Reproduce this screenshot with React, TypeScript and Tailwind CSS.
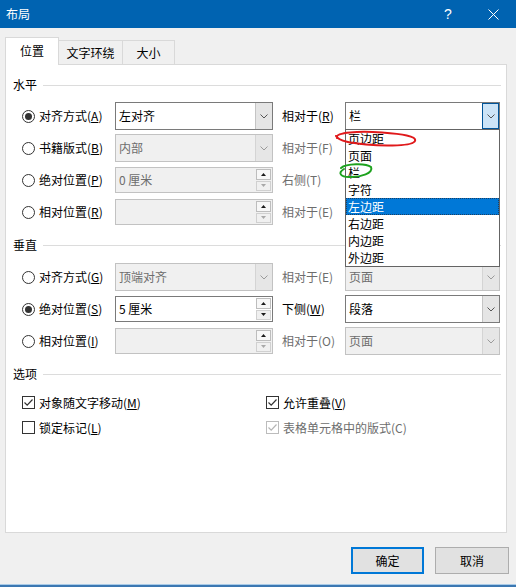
import * as React from "react";
import clsx from "clsx";

const LIST_ITEMS = ["页边距", "页面", "栏", "字符", "左边距", "右边距", "内边距", "外边距"];

function Acc({ text, k }: { text: string; k: string }) {
  return (
    <>
      {text}(<u>{k}</u>)
    </>
  );
}

function Chevron({ dim }: { dim?: boolean }) {
  return (
    <svg width="8" height="5" viewBox="0 0 8 5">
      <path d="M0.5 0.5 L4 4 L7.5 0.5" fill="none" stroke={dim ? "#9a9a9a" : "#555555"} strokeWidth="1" />
    </svg>
  );
}

function Tri({ up, dim }: { up?: boolean; dim?: boolean }) {
  return (
    <svg width="5" height="3" viewBox="0 0 5 3">
      <path d={up ? "M0 3 L2.5 0 L5 3Z" : "M0 0 L2.5 3 L5 0Z"} fill={dim ? "#a8a8a8" : "#1a1a1a"} />
    </svg>
  );
}

function Radio({ checked }: { checked?: boolean }) {
  return (
    <span className="flex h-[13px] w-[13px] shrink-0 items-center justify-center rounded-full border border-[#333333] bg-white">
      {checked && <span className="h-[7px] w-[7px] rounded-full bg-[#333333]" />}
    </span>
  );
}

function Check({ checked, disabled }: { checked?: boolean; disabled?: boolean }) {
  return (
    <span
      className={clsx(
        "flex h-[13px] w-[13px] shrink-0 items-center justify-center border bg-white",
        disabled ? "border-[#bcbcbc]" : "border-[#333333]"
      )}
    >
      {checked && (
        <svg width="11" height="11" viewBox="0 0 11 11">
          <path d="M1.5 5.5 L4.2 8.2 L9.5 2.5" fill="none" stroke={disabled ? "#b5b5b5" : "#333333"} strokeWidth="1.2" />
        </svg>
      )}
    </span>
  );
}

interface ComboProps {
  value: string;
  disabled?: boolean;
  active?: boolean;
  className?: string;
  children?: React.ReactNode;
}

function Combo({ value, disabled, active, className, children }: ComboProps) {
  return (
    <div
      className={clsx(
        "relative flex h-[28px] border",
        disabled ? "border-[#c2c2c2] bg-[#f0f0f0] text-[#6d6d6d]" : "border-[#7a7a7a] bg-white text-black",
        className
      )}
    >
      <div className="flex flex-1 items-center pl-[3px]">{value}</div>
      <div
        className={clsx(
          "flex w-[17px] items-center justify-center",
          active
            ? "border border-[#005499] bg-[#cce4f7]"
            : disabled
              ? "border-l border-[#d4d4d4] bg-[#e6e6e6]"
              : "border-l border-[#c4c4c4] bg-[#e5e5e5]"
        )}
      >
        <Chevron dim={disabled} />
      </div>
      {children}
    </div>
  );
}

function Spin({ value, disabled, downDim }: { value: string; disabled?: boolean; downDim?: boolean }) {
  return (
    <div
      className={clsx(
        "flex h-[26px] w-[158px] border",
        disabled ? "border-[#c2c2c2] bg-[#f0f0f0] text-[#6d6d6d]" : "border-[#7a7a7a] bg-white text-black"
      )}
    >
      <div className="flex flex-1 items-center pl-[3px]">{value}</div>
      <div className="flex w-[16px] flex-col gap-px py-px pr-px">
        <div className="flex flex-1 items-center justify-center border border-[#bdbdbd] bg-[#f7f7f7]">
          <Tri up />
        </div>
        <div className="flex flex-1 items-center justify-center border border-[#d0d0d0] bg-[#f0f0f0]">
          <Tri dim={downDim} />
        </div>
      </div>
    </div>
  );
}

function GroupHeader({ title }: { title: string }) {
  return (
    <div className="flex h-[18px] items-center pl-[7px] pr-[5px]">
      <span>{title}</span>
      <div className="ml-[6px] h-px flex-1 bg-[#dcdcdc]" />
    </div>
  );
}

function Row({
  checked,
  label,
  control,
  right,
  rightDim,
  rightControl,
}: {
  checked?: boolean;
  label: React.ReactNode;
  control: React.ReactNode;
  right: React.ReactNode;
  rightDim?: boolean;
  rightControl?: React.ReactNode;
}) {
  return (
    <div className="flex h-[32px] items-center pl-[16px]">
      <Radio checked={checked} />
      <span className="ml-[4px] w-[76px] whitespace-nowrap">{label}</span>
      {control}
      <span className={clsx("ml-[9px] w-[63px] whitespace-nowrap", rightDim && "text-[#6d6d6d]")}>{right}</span>
      {rightControl}
    </div>
  );
}

export default function App() {
  return (
    <div className="relative h-[588px] w-[516px] overflow-hidden bg-white font-['Noto_Sans_CJK_SC',sans-serif] text-[12px] leading-[16px] text-black">
      <div className="flex h-[584px] flex-col bg-[#f0f0f0]">
        {/* title bar */}
        <div className="flex h-[28px] items-center bg-[#0063b1] text-white">
          <span className="pl-[6px]">布局</span>
          <span className="ml-auto flex w-[46px] justify-center font-['Liberation_Sans',sans-serif] text-[14px]">?</span>
          <span className="flex w-[45px] justify-center">
            <svg width="11" height="11" viewBox="0 0 11 11">
              <path d="M0.5 0.5 L10.5 10.5 M10.5 0.5 L0.5 10.5" stroke="#ffffff" strokeWidth="1" />
            </svg>
          </span>
        </div>

        <div className="flex flex-1 flex-col pl-[5px] pr-[7px]">
          {/* tabs */}
          <div className="flex items-end pt-[9px]">
            <div className="relative z-10 -mb-px flex h-[28px] w-[54px] items-center justify-center border-x border-t border-[#d9d9d9] bg-white pb-px">
              位置
            </div>
            <div className="flex h-[24px] w-[64px] items-center justify-center border-t border-r border-[#d9d9d9] bg-[#f0f0f0]">
              文字环绕
            </div>
            <div className="flex h-[24px] w-[52px] items-center justify-center border-t border-r border-[#d9d9d9] bg-[#f0f0f0]">
              大小
            </div>
          </div>

          {/* panel */}
          <div className="flex h-[469px] w-[502px] flex-col border border-[#d9d9d9] bg-white pt-[11px]">
            <GroupHeader title="水平" />
            <div className="mt-[6px] flex flex-col">
              <Row
                checked
                label={<Acc text="对齐方式" k="A" />}
                control={<Combo value="左对齐" className="w-[158px]" />}
                right={<Acc text="相对于" k="R" />}
                rightControl={
                  <Combo value="栏" active className="z-20 w-[155px]">
                    <div className="absolute top-full -left-px w-[155px] border border-[#646464] bg-white text-black">
                      {LIST_ITEMS.map((it) => (
                        <div
                          key={it}
                          className={clsx(
                            "flex h-[17px] items-center pl-[2px]",
                            it === "左边距" && "border border-dotted border-[#1c3f63] bg-[#0078d7] pl-px text-white"
                          )}
                        >
                          {it}
                        </div>
                      ))}
                    </div>
                  </Combo>
                }
              />
              <Row
                label={<Acc text="书籍版式" k="B" />}
                control={<Combo value="内部" disabled className="w-[158px]" />}
                right="相对于(F)"
                rightDim
                rightControl={<Combo value="" disabled className="w-[155px]" />}
              />
              <Row
                label={<Acc text="绝对位置" k="P" />}
                control={<Spin value="0 厘米" disabled downDim />}
                right="右侧(T)"
                rightDim
                rightControl={<Combo value="" disabled className="w-[155px]" />}
              />
              <Row
                label={<Acc text="相对位置" k="R" />}
                control={<Spin value="" disabled downDim />}
                right="相对于(E)"
                rightDim
                rightControl={<Combo value="" disabled className="w-[155px]" />}
              />
            </div>

            <div className="mt-[8px]">
              <GroupHeader title="垂直" />
            </div>
            <div className="mt-[7px] flex flex-col">
              <Row
                label={<Acc text="对齐方式" k="G" />}
                control={<Combo value="顶端对齐" disabled className="w-[158px]" />}
                right="相对于(E)"
                rightDim
                rightControl={<Combo value="页面" disabled className="w-[155px]" />}
              />
              <Row
                checked
                label={<Acc text="绝对位置" k="S" />}
                control={<Spin value="5 厘米" />}
                right={<Acc text="下侧" k="W" />}
                rightControl={<Combo value="段落" className="h-[27px] w-[155px]" />}
              />
              <Row
                label={<Acc text="相对位置" k="I" />}
                control={<Spin value="" disabled downDim />}
                right="相对于(O)"
                rightDim
                rightControl={<Combo value="页面" disabled className="w-[155px]" />}
              />
            </div>

            <div className="mt-[8px]">
              <GroupHeader title="选项" />
            </div>
            <div className="mt-[7px] flex flex-col">
              <div className="flex h-[25px] items-center pl-[16px]">
                <div className="flex w-[244px] items-center">
                  <Check checked />
                  <span className="ml-[4px]">
                    <Acc text="对象随文字移动" k="M" />
                  </span>
                </div>
                <Check checked />
                <span className="ml-[4px]">
                  <Acc text="允许重叠" k="V" />
                </span>
              </div>
              <div className="flex h-[25px] items-center pl-[16px]">
                <div className="flex w-[244px] items-center">
                  <Check />
                  <span className="ml-[4px]">
                    <Acc text="锁定标记" k="L" />
                  </span>
                </div>
                <Check checked disabled />
                <span className="ml-[4px] text-[#6d6d6d]">表格单元格中的版式(C)</span>
              </div>
            </div>
          </div>

          {/* buttons */}
          <div className="mt-[14px] flex justify-end gap-[11px]">
            <button className="flex h-[27px] w-[73px] items-center justify-center border-2 border-[#0078d7] bg-[#e1e1e1]">
              确定
            </button>
            <button className="flex h-[27px] w-[74px] items-center justify-center border border-[#adadad] bg-[#e1e1e1]">
              取消
            </button>
          </div>
        </div>
      </div>
      <div className="h-px bg-[#a9cbe8]" />
      <div className="h-[2px] bg-[#3c78b2]" />

      {/* hand-drawn annotations */}
      <svg className="pointer-events-none absolute top-0 left-0 z-30" width="516" height="588" viewBox="0 0 516 588">
        <path
          d="M337 138 C 334 132, 360 131, 382 132.5 C 402 134, 417 136, 415 141 C 413 146, 386 146.5, 366 144.5 C 352 143, 339 141.5, 336 136"
          fill="none"
          stroke="#e0191b"
          strokeWidth="2"
          strokeLinecap="round"
        />
        <path
          d="M341 168 C 346 163.5, 366 163, 371 167 C 374 173, 361 177.5, 349 177 C 341 177, 337 173, 344 169"
          fill="none"
          stroke="#1ea21e"
          strokeWidth="2"
          strokeLinecap="round"
        />
      </svg>
    </div>
  );
}
